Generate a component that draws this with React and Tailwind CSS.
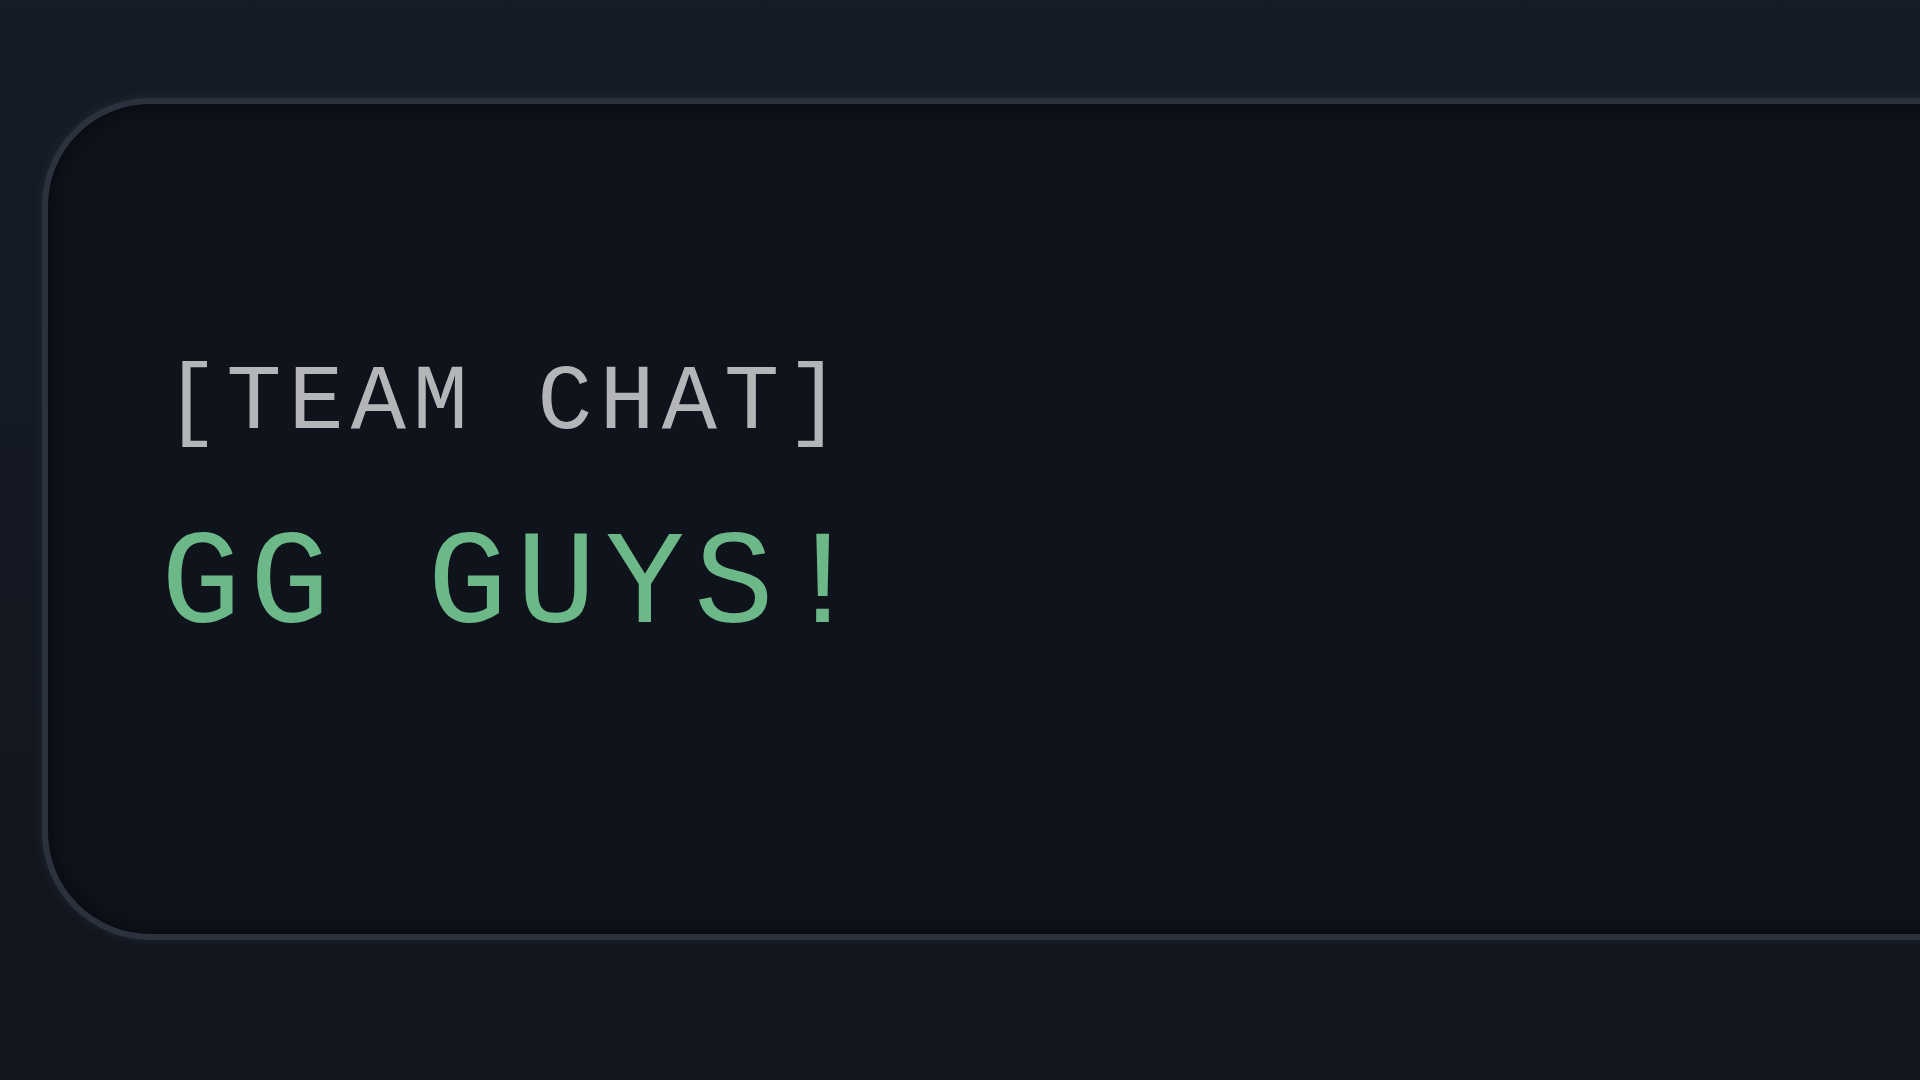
import React from 'react';

function ChatCard() {
  return (
    <div className="ml-[42px] w-[1980px] h-[842px] shrink-0 rounded-[108px] border-[6px] border-[#2b313d] bg-[#0f131c] shadow-[inset_0_0_26px_rgba(0,0,0,0.6),0_0_10px_rgba(60,68,84,0.35)] pl-[116px] pt-[254px]" style={{ fontFamily: '"Liberation Mono", "DejaVu Sans Mono", monospace' }}>
      <div className="text-[92px] leading-none tracking-[7px] text-[#b4b5b9] whitespace-pre">[TEAM CHAT]</div>
      <div className="mt-[70px] -ml-[3px] text-[133px] leading-none tracking-[9px] text-[#6db889] whitespace-pre">GG GUYS!</div>
    </div>
  );
}

export default function App() {
  return (
    <div className="w-[1920px] h-[1080px] overflow-hidden bg-gradient-to-b from-[#161c27] to-[#11151d] pt-[98px] flex">
      <ChatCard />
    </div>
  );
}
